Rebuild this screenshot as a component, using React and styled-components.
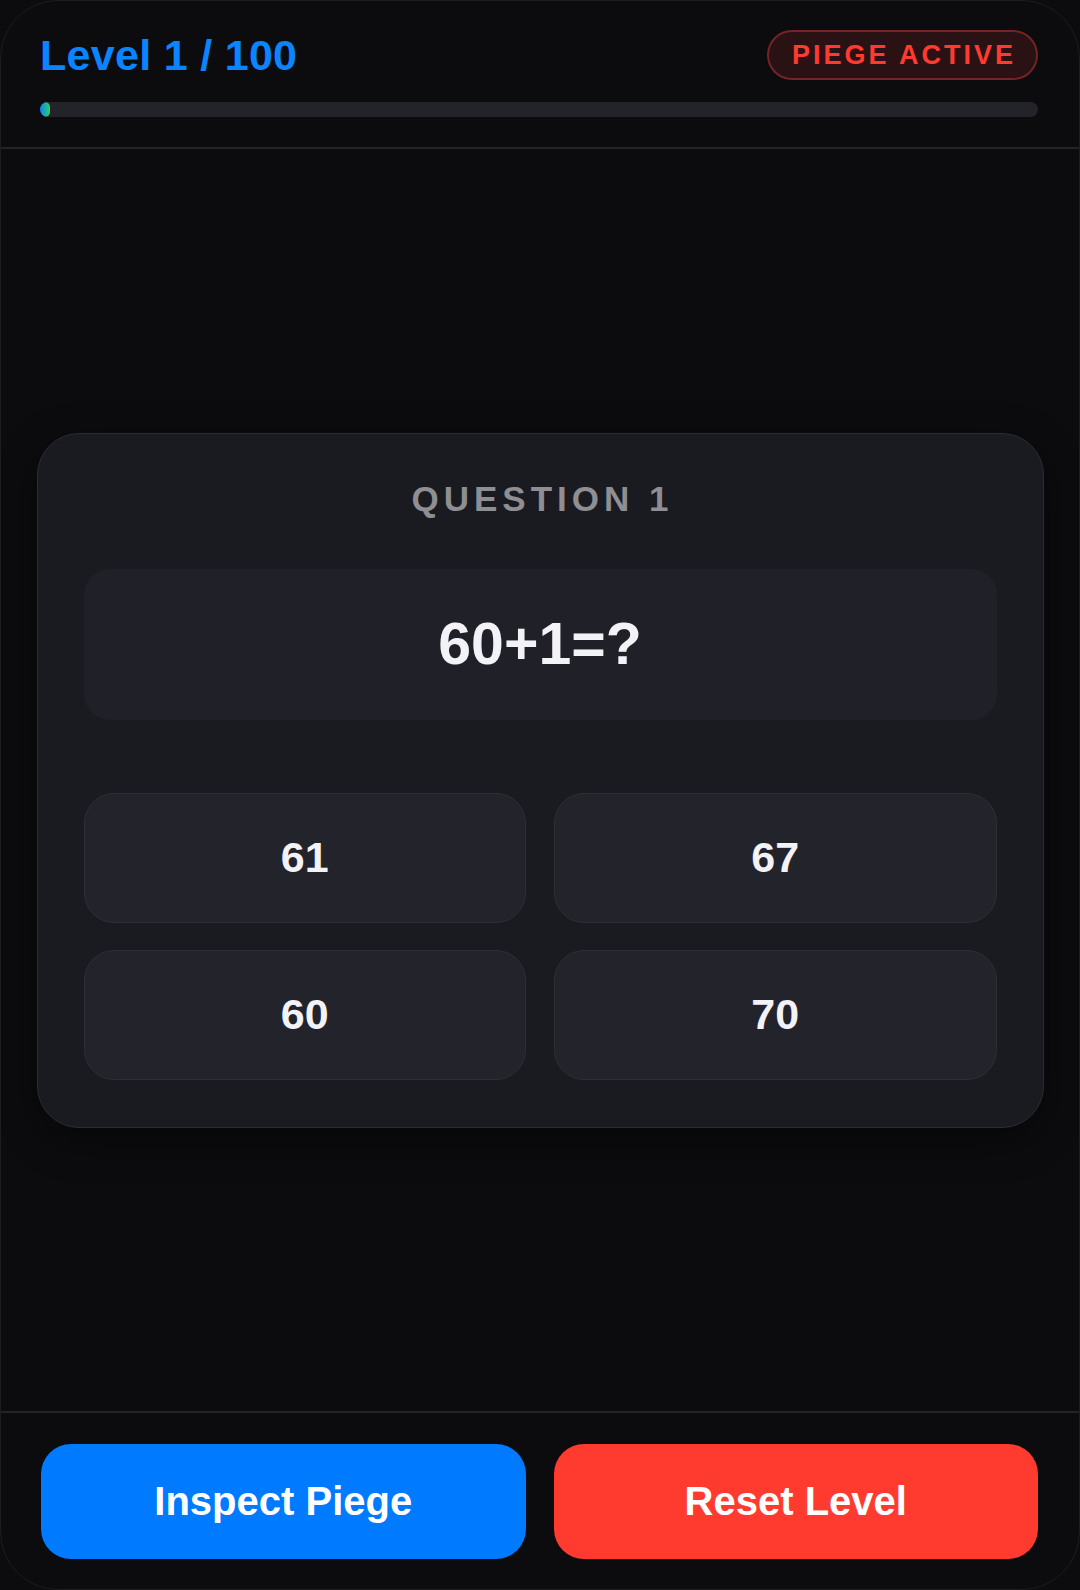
import React from "react";
import styled, { createGlobalStyle } from "styled-components";

const GlobalStyle = createGlobalStyle`
  html, body {
    margin: 0;
    padding: 0;
    background: #0c0c0f;
  }
  body {
    font-family: "Liberation Sans", Arial, sans-serif;
    -webkit-font-smoothing: antialiased;
  }
  * {
    box-sizing: border-box;
  }
`;

const Frame = styled.div`
  width: 1080px;
  height: 1590px;
  display: flex;
  flex-direction: column;
  background: #0c0c0f;
  border: 1.5px solid #1d1d20;
  border-radius: 58px;
  overflow: hidden;
`;

const Header = styled.header`
  display: flex;
  flex-direction: column;
  gap: 22px;
  padding: 29px 41px 30px 39px;
  border-bottom: 2px solid #232327;
`;

const TopRow = styled.div`
  display: flex;
  align-items: center;
  justify-content: space-between;
`;

const LevelTitle = styled.h1`
  margin: 0;
  font-size: 43px;
  font-weight: 700;
  color: #0a84ff;
  letter-spacing: 0.3px;
`;

const Badge = styled.span`
  display: inline-flex;
  align-items: center;
  height: 50px;
  padding: 0 20px 0 23px;
  border-radius: 999px;
  background: #2a1214;
  border: 2px solid #742327;
  color: #ff3b30;
  font-size: 27px;
  font-weight: 700;
  letter-spacing: 3px;
`;

const Track = styled.div`
  height: 15px;
  border-radius: 8px;
  background: #232429;
  overflow: hidden;
`;

const Fill = styled.div`
  height: 100%;
  border-radius: 8px;
  background: linear-gradient(90deg, #0a84ff, #30d158);
`;

const Main = styled.main`
  flex: 1;
  display: flex;
  align-items: center;
  justify-content: center;
`;

const Card = styled.section`
  width: 1007px;
  display: flex;
  flex-direction: column;
  align-items: stretch;
  padding: 45px 46px 47px;
  background: #1a1b21;
  border: 1.5px solid #2c2d33;
  border-radius: 42px;
  box-shadow: 0 12px 40px rgba(0, 0, 0, 0.45);
`;

const QuestionLabel = styled.div`
  text-align: center;
  font-size: 35px;
  font-weight: 700;
  letter-spacing: 5px;
  text-indent: 5px;
  color: #8e8e93;
`;

const QuestionBox = styled.div`
  margin-top: 50px;
  height: 151px;
  display: flex;
  align-items: center;
  justify-content: center;
  background: #1f2028;
  border-radius: 26px;
  font-size: 59px;
  font-weight: 700;
  color: #f2f2f7;
`;

const AnswerGrid = styled.div`
  margin-top: 73px;
  display: grid;
  grid-template-columns: 1fr 1fr;
  column-gap: 28px;
  row-gap: 27px;
`;

const AnswerButton = styled.button`
  height: 130px;
  display: flex;
  align-items: center;
  justify-content: center;
  background: #23242b;
  border: 1.5px solid #2e2f36;
  border-radius: 30px;
  color: #f2f2f7;
  font-family: inherit;
  font-size: 43px;
  font-weight: 700;
  cursor: pointer;
`;

const Footer = styled.footer`
  display: grid;
  grid-template-columns: 1fr 1fr;
  column-gap: 28px;
  padding: 31px 41px 30px 40px;
  border-top: 2px solid #232327;
`;

const ActionButton = styled.button`
  height: 115px;
  border: none;
  border-radius: 30px;
  background: ${(p) => (p.$tone === "danger" ? "#ff3b30" : "#007aff")};
  color: #ffffff;
  font-family: inherit;
  font-size: 40px;
  font-weight: 700;
  cursor: pointer;
`;

const answers = ["61", "67", "60", "70"];

export default function App() {
  const level = 1;
  const total = 100;
  return (
    <>
      <GlobalStyle />
      <Frame>
        <Header>
          <TopRow>
            <LevelTitle>
              Level {level} / {total}
            </LevelTitle>
            <Badge>PIEGE ACTIVE</Badge>
          </TopRow>
          <Track>
            <Fill style={{ width: `${Math.max((level / total) * 100, 1)}%` }} />
          </Track>
        </Header>
        <Main>
          <Card>
            <QuestionLabel>QUESTION 1</QuestionLabel>
            <QuestionBox>60+1=?</QuestionBox>
            <AnswerGrid>
              {answers.map((a) => (
                <AnswerButton key={a}>{a}</AnswerButton>
              ))}
            </AnswerGrid>
          </Card>
        </Main>
        <Footer>
          <ActionButton>Inspect Piege</ActionButton>
          <ActionButton $tone="danger">Reset Level</ActionButton>
        </Footer>
      </Frame>
    </>
  );
}
